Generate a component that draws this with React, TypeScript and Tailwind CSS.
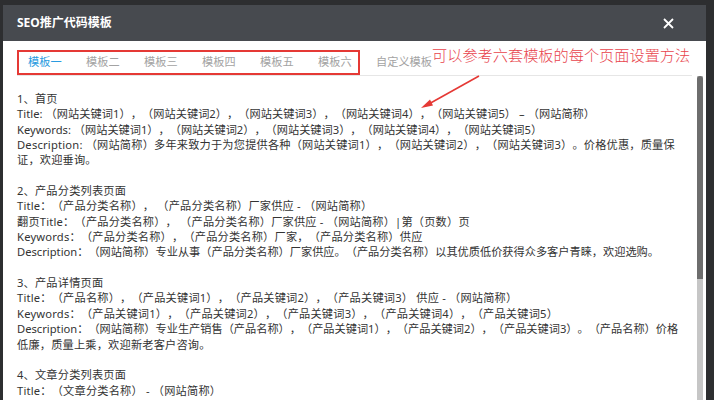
import React from "react";

const tabs = ["模板一", "模板二", "模板三", "模板四", "模板五", "模板六"];

// one entry per visual line; "" is a blank line. track = letter-spacing class
const lines: { text: string; track?: string }[] = [
    { text: "1、首页" },
    {
        text: "Title: （网站关键词1），（网站关键词2），（网站关键词3），（网站关键词4），（网站关键词5） – （网站简称）",
        track: "tracking-[0.05px]",
    },
    {
        text: "Keywords: （网站关键词1），（网站关键词2），（网站关键词3），（网站关键词4），（网站关键词5）",
        track: "tracking-[0px]",
    },
    { text: "Description: （网站简称）多年来致力于为您提供各种（网站关键词1），（网站关键词2），（网站关键词3）。价格优惠，质量保" },
    { text: "证，欢迎垂询。" },
    { text: "" },
    { text: "2、产品分类列表页面" },
    { text: "Title：（产品分类名称）， （产品分类名称）厂家供应 - （网站简称）" },
    { text: "翻页Title：（产品分类名称）， （产品分类名称）厂家供应 - （网站简称）|第（页数）页" },
    { text: "Keywords：（产品分类名称），（产品分类名称）厂家，（产品分类名称）供应" },
    {
        text: "Description：（网站简称）专业从事（产品分类名称）厂家供应。（产品分类名称）以其优质低价获得众多客户青睐，欢迎选购。",
        track: "tracking-[0px]",
    },
    { text: "" },
    { text: "3、产品详情页面" },
    { text: "Title：（产品名称），（产品关键词1），（产品关键词2），（产品关键词3） 供应 - （网站简称）" },
    { text: "Keywords：（产品关键词1），（产品关键词2），（产品关键词3），（产品关键词4），（产品关键词5）" },
    {
        text: "Description：（网站简称）专业生产销售（产品名称），（产品关键词1），（产品关键词2），（产品关键词3）。（产品名称）价格",
        track: "tracking-[0px]",
    },
    { text: "低廉，质量上乘，欢迎新老客户咨询。" },
    { text: "" },
    { text: "4、文章分类列表页面" },
    { text: "Title：（文章分类名称） - （网站简称）" },
];

export default function App() {
    return (
        <div className="h-[400px] w-[714px] overflow-hidden bg-[#2d2e30] pt-[5px] font-['Noto_Sans','Noto_Sans_CJK_SC',sans-serif] [text-spacing-trim:space-all]">
            <div className="relative ml-[3px] flex h-[395px] w-[703px] flex-col bg-white">
                <div className="flex h-[36px] shrink-0 items-center justify-between bg-[#474a4f] pl-[14px] pr-[32px]">
                    <span className="text-[12px] font-bold text-white">SEO推广代码模板</span>
                    <svg width="11" height="11" viewBox="0 0 11 11">
                        <path d="M1 1L10 10M10 1L1 10" stroke="#fff" strokeWidth="1.8" />
                    </svg>
                </div>

                <div className="px-[14px] pt-[8px]">
                    <div className="relative flex h-[27px] items-center border-b border-[#e6e6e6] pl-[11px] text-[11.2px]">
                        {tabs.map((t, i) => (
                            <span
                                key={t}
                                className={`w-[58px] ${i === 0 ? "text-[#2a9be0]" : "text-[#a3a3a3]"}`}
                            >
                                {t}
                            </span>
                        ))}
                        <span className="text-[#a3a3a3]">自定义模板</span>
                        <div className="absolute left-0 top-[1px] h-[25px] w-[343px] border-2 border-[#e53935]" />
                    </div>
                </div>

                <div className="flex min-h-0 flex-1 pr-[3px]">
                    <div className="flex-1 pl-[14px] pt-[15px] text-[11.2px] leading-[15.35px] text-[#333]">
                        {lines.map((l, i) => (
                            <div key={i} className={`h-[15.35px] whitespace-nowrap ${l.track ?? "tracking-[0.2px]"}`}>
                                {l.text}
                            </div>
                        ))}
                    </div>
                    <div className="flex w-[6px] flex-col bg-[#c6c6c6]">
                        <div className="h-[203px] rounded-t-[3px] bg-[#6d6d6d]" />
                    </div>
                </div>

                <span className="absolute left-[429px] top-[39px] text-[15.2px] font-light text-[#e8434c]">
                    可以参考六套模板的每个页面设置方法
                </span>
                <svg className="absolute left-0 top-0" width="703" height="395" viewBox="0 0 703 395">
                    <line x1="476" y1="71" x2="424" y2="100" stroke="#e53935" strokeWidth="1.6" />
                    <path d="M418 103L427 94.5L430 100.5Z" fill="#e53935" />
                </svg>
            </div>
        </div>
    );
}
